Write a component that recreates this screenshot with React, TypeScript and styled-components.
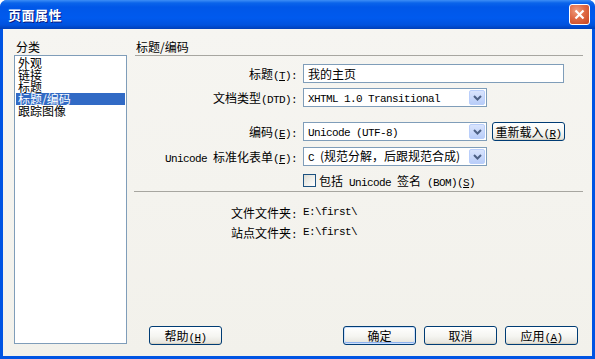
import React from "react";
import styled, { createGlobalStyle } from "styled-components";

const GlobalStyle = createGlobalStyle`
  html, body {
    margin: 0;
    padding: 0;
    background: #ffffff;
  }
  body {
    font-family: "Noto Sans CJK SC", "DejaVu Sans", sans-serif;
    font-size: 12px;
    color: #000;
  }
`;

const Window = styled.div`
  width: 595px;
  height: 359px;
  display: flex;
  flex-direction: column;
  border-radius: 7px 7px 0 0;
  overflow: hidden;
  background: #0054e3;
`;

const TitleBar = styled.div`
  height: 29px;
  flex: none;
  display: flex;
  align-items: center;
  justify-content: space-between;
  padding: 0 5px 0 8px;
  background: linear-gradient(
    #3d8ef6 0px,
    #0a64ea 3px,
    #0057e8 7px,
    #005aee 18px,
    #0052de 25px,
    #003fb8 29px
  );
`;

const TitleText = styled.span`
  color: #fff;
  font-size: 13px;
  font-weight: bold;
  letter-spacing: 0.5px;
  text-shadow: 1px 1px 0 #0a1a80;
`;

const CloseButton = styled.div`
  width: 19px;
  height: 19px;
  border: 1px solid #fff;
  border-radius: 3px;
  display: flex;
  align-items: center;
  justify-content: center;
  background: radial-gradient(circle at 35% 30%, #ef9d7e 0%, #df6a45 45%, #c94420 100%);
`;

const Body = styled.div`
  flex: 1;
  display: flex;
  gap: 8px;
  margin: 0 3px 3px 3px;
  padding: 11px 9px 12px 11px;
  background: linear-gradient(#f6f5f1, #f2f1eb);
`;

const Sidebar = styled.div`
  width: 113px;
  display: flex;
  flex-direction: column;
`;

const Caption = styled.div`
  line-height: 14px;
  height: 14px;
  padding-left: 2px;
  margin-bottom: 1px;
`;

const ListBox = styled.div`
  flex: 1;
  border: 1px solid #7f9db9;
  background: #fff;
  padding: 1px;
`;

const ListItem = styled.div<{ $selected?: boolean }>`
  height: 12px;
  line-height: 12px;
  padding-left: 2px;
  background: ${(p) => (p.$selected ? "#316ac5" : "transparent")};
  color: ${(p) => (p.$selected ? "#fff" : "#000")};
`;

const Main = styled.div`
  flex: 1;
  display: flex;
  flex-direction: column;
`;

const SectionHeader = styled.div`
  line-height: 14px;
  height: 14px;
  padding-left: 1px;
  padding-bottom: 1px;
  border-bottom: 1px solid #a7a6a0;
`;

const FieldRow = styled.div<{ $top: number; $height?: number }>`
  display: grid;
  grid-template-columns: 162px auto;
  column-gap: 6px;
  align-items: center;
  margin-top: ${(p) => p.$top}px;
  height: ${(p) => p.$height ?? 19}px;
`;

const Label = styled.div`
  text-align: right;
  white-space: nowrap;
`;

const Lat = styled.span`
  font-family: "Liberation Mono", monospace;
  font-size: 11px;
  letter-spacing: -0.6px;
`;

const Controls = styled.div`
  display: flex;
  align-items: center;
  gap: 5px;
`;

const TextInput = styled.div`
  width: 255px;
  height: 17px;
  border: 1px solid #7f9db9;
  background: #fff;
  padding-left: 4px;
  line-height: 17px;
  white-space: nowrap;
`;

const SelectBox = styled.div`
  width: 182px;
  height: 17px;
  border: 1px solid #7f9db9;
  background: #fff;
  display: flex;
  align-items: center;
  justify-content: space-between;
`;

const SelectValue = styled.span`
  padding-left: 4px;
  white-space: nowrap;
  line-height: 17px;
`;

const ArrowButton = styled.div`
  width: 14px;
  height: 13px;
  margin-right: 1px;
  border: 1px solid #bacffb;
  border-radius: 2px;
  background: linear-gradient(#d9e4fd, #b9cdf8);
  display: flex;
  align-items: center;
  justify-content: center;
`;

const Button = styled.div<{ $default?: boolean }>`
  width: 71px;
  height: 17px;
  border: 1px solid #003c74;
  border-radius: 3px;
  background: linear-gradient(#ffffff, #f5f5f1 55%, #e3e2da);
  box-shadow: ${(p) =>
    p.$default
      ? "inset 0 0 0 1px #cde0fb, inset 0 -1px 0 1px #8db2ef"
      : "inset 0 -1px 0 #d8d2c2"};
  text-align: center;
  line-height: 17px;
  white-space: nowrap;
`;

const CheckRow = styled.div`
  display: flex;
  align-items: center;
  gap: 3px;
  margin-left: 168px;
  margin-top: 8px;
  height: 13px;
`;

const CheckBox = styled.div`
  width: 11px;
  height: 11px;
  border: 1px solid #1c5180;
  background: linear-gradient(135deg, #dcdcd4, #ffffff);
`;

const Separator = styled.div`
  margin-top: 4px;
  margin-left: -1px;
  height: 1px;
  background: #a7a6a0;
`;

const ButtonRow = styled.div`
  margin-top: auto;
  margin-bottom: -1px;
  display: flex;
  align-items: center;
  padding: 0 5px 0 14px;
  gap: 8px;
`;

const Spacer = styled.div`
  flex: 1;
`;

const Arrow = () => (
  <svg width="9" height="6" viewBox="0 0 9 6">
    <path d="M1 1 L4.5 4.5 L8 1" stroke="#4d6185" strokeWidth="2" fill="none" />
  </svg>
);

const Select: React.FC<{ children: React.ReactNode }> = ({ children }) => (
  <SelectBox>
    <SelectValue>{children}</SelectValue>
    <ArrowButton>
      <Arrow />
    </ArrowButton>
  </SelectBox>
);

export default function App() {
  return (
    <>
      <GlobalStyle />
      <Window>
        <TitleBar>
          <TitleText>页面属性</TitleText>
          <CloseButton>
            <svg width="11" height="11" viewBox="0 0 11 11">
              <path d="M1.5 1.5 L9.5 9.5 M9.5 1.5 L1.5 9.5" stroke="#fff" strokeWidth="2.2" />
            </svg>
          </CloseButton>
        </TitleBar>
        <Body>
          <Sidebar>
            <Caption>分类</Caption>
            <ListBox>
              <ListItem>外观</ListItem>
              <ListItem>链接</ListItem>
              <ListItem>标题</ListItem>
              <ListItem $selected>标题/编码</ListItem>
              <ListItem>跟踪图像</ListItem>
            </ListBox>
          </Sidebar>
          <Main>
            <SectionHeader>标题/编码</SectionHeader>
            <FieldRow $top={8}>
              <Label>
                标题<Lat>(<u>T</u>):</Lat>
              </Label>
              <TextInput>我的主页</TextInput>
            </FieldRow>
            <FieldRow $top={5}>
              <Label>
                文档类型<Lat>(DTD):</Lat>
              </Label>
              <Select>
                <Lat>XHTML 1.0 Transitional</Lat>
              </Select>
            </FieldRow>
            <FieldRow $top={15}>
              <Label>
                编码<Lat>(<u>E</u>):</Lat>
              </Label>
              <Controls>
                <Select>
                  <Lat>Unicode (UTF-8)</Lat>
                </Select>
                <Button>
                  重新载入<Lat>(<u>R</u>)</Lat>
                </Button>
              </Controls>
            </FieldRow>
            <FieldRow $top={6}>
              <Label>
                <Lat>Unicode </Lat>标准化表单<Lat>(<u>F</u>):</Lat>
              </Label>
              <Select>
                <Lat>C </Lat>(规范分解，后跟规范合成)
              </Select>
            </FieldRow>
            <CheckRow>
              <CheckBox />
              <span>
                包括<Lat> Unicode </Lat>签名<Lat> (BOM)(<u>S</u>)</Lat>
              </span>
            </CheckRow>
            <Separator />
            <FieldRow $top={10} $height={20}>
              <Label>
                文件文件夹<Lat>:</Lat>
              </Label>
              <Lat>E:\first\</Lat>
            </FieldRow>
            <FieldRow $top={0} $height={20}>
              <Label>
                站点文件夹<Lat>:</Lat>
              </Label>
              <Lat>E:\first\</Lat>
            </FieldRow>
            <ButtonRow>
              <Button>
                帮助<Lat>(<u>H</u>)</Lat>
              </Button>
              <Spacer />
              <Button $default>确定</Button>
              <Button>取消</Button>
              <Button>
                应用<Lat>(<u>A</u>)</Lat>
              </Button>
            </ButtonRow>
          </Main>
        </Body>
      </Window>
    </>
  );
}
